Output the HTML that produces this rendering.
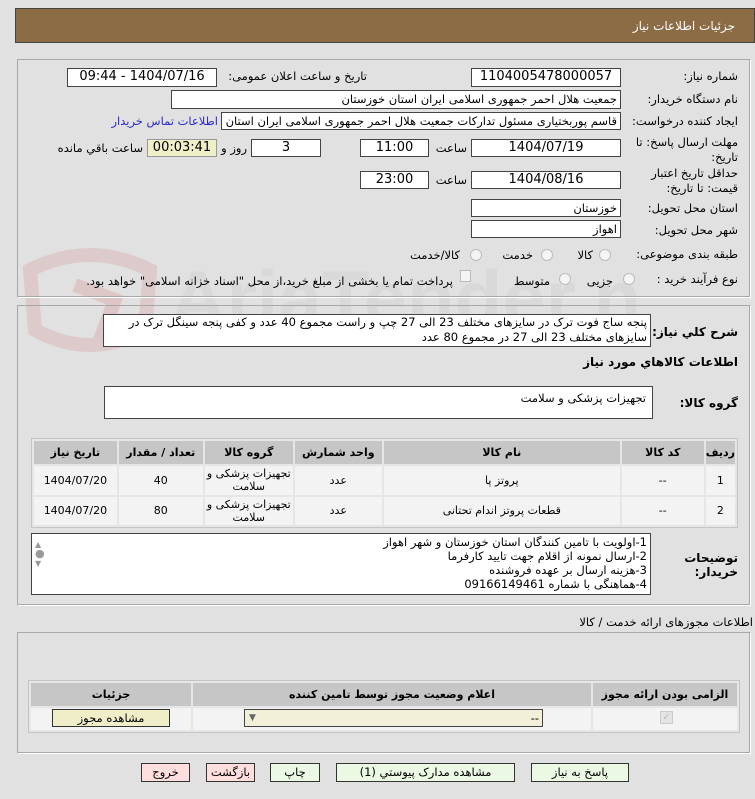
<!DOCTYPE html>
<html><head><meta charset="utf-8"><style>
*{box-sizing:border-box;margin:0;padding:0}
body{width:755px;height:799px;background:#e1e1e1;position:relative;overflow:hidden;font-family:"DejaVu Sans","Liberation Sans",sans-serif;font-size:11.5px;color:#000}
.a{position:absolute}
.in{position:absolute;background:#fff;border:1px solid #444;text-align:right;padding-right:3px;line-height:16px;white-space:nowrap;overflow:hidden;direction:rtl}
.c{text-align:center;padding:0}
.l{position:absolute;white-space:nowrap;direction:rtl;text-align:right}
.panel{position:absolute;border:1px solid #a8a8a8;border-right-color:#fff;border-bottom-color:#fff;box-shadow:inset -1px -1px 0 #a8a8a8}
.radio{position:absolute;width:12px;height:12px;border-radius:50%;border:1px solid #bbb;background:#f4f4f4}
table{border-collapse:separate;border-spacing:2px;position:absolute;background:#e6e6e6;border:1px solid #c4c4c4;direction:rtl}
td,th{text-align:center;direction:rtl}
th{background:#c6c6c6;font-weight:bold;font-size:11px}
td{background:#f3f3f3}
.btn{position:absolute;border:1px solid #333;background:#eaf8e4;text-align:center;line-height:17px;height:19px;direction:rtl}
.pink{background:#ffdede}
</style></head><body>
<div class="a" style="left:15px;top:8px;width:740px;height:35px;background:#8c6c45;border:1px solid #444"></div>
<div class="l" style="right:20px;top:19px;color:#fff;font-size:12px">جزئیات اطلاعات نیاز</div>

<svg class="a" style="left:20px;top:240px;opacity:.4" width="620" height="120">
<path d="M10 30 Q70 0 130 30 L125 90 Q70 120 15 90 Z" fill="none" stroke="#d9a9a9" stroke-width="14"/>
<path d="M55 45 L95 60 L80 100" fill="none" stroke="#dba0a0" stroke-width="14"/>
<text x="150" y="85" font-family="Liberation Sans" font-weight="bold" font-size="78" fill="#cfcfcf">AriaTender.net</text>
</svg>

<div class="panel" style="left:17px;top:59px;width:734px;height:239px"></div>
<div class="l" style="right:17px;top:69px">شماره نیاز:</div>
<div class="in c" style="left:471px;top:68px;width:150px;height:19px;font-size:13px">1104005478000057</div>
<div class="l" style="right:388px;top:69px">تاریخ و ساعت اعلان عمومی:</div>
<div class="in c" style="left:67px;top:68px;width:150px;height:19px;font-size:13px">1404/07/16 - 09:44</div>

<div class="l" style="right:17px;top:92px">نام دستگاه خریدار:</div>
<div class="in" style="left:171px;top:90px;width:450px;height:19px">جمعیت هلال احمر جمهوری اسلامی ایران استان خوزستان</div>

<div class="l" style="right:17px;top:114px">ایجاد کننده درخواست:</div>
<div class="in" style="left:221px;top:112px;width:400px;height:18px">قاسم پوربختیاری مسئول تدارکات جمعیت هلال احمر جمهوری اسلامی ایران استان</div>
<div class="l" style="right:537px;top:114px;color:#2a2ad0">اطلاعات تماس خریدار</div>

<div class="l" style="right:17px;top:135px">مهلت ارسال پاسخ: تا</div>
<div class="l" style="right:17px;top:150px">تاریخ:</div>
<div class="in c" style="left:471px;top:139px;width:150px;height:18px;font-size:13px">1404/07/19</div>
<div class="l" style="right:288px;top:141px">ساعت</div>
<div class="in c" style="left:360px;top:139px;width:69px;height:18px;font-size:13px">11:00</div>
<div class="in c" style="left:251px;top:139px;width:70px;height:18px;font-size:13px">3</div>
<div class="l" style="right:508px;top:141px">روز و</div>
<div class="in c" style="left:147px;top:139px;width:70px;height:18px;font-size:13px;background:#f0f0c8;border-color:#999">00:03:41</div>
<div class="l" style="right:612px;top:141px">ساعت باقي مانده</div>

<div class="l" style="right:17px;top:166px">حداقل تاریخ اعتبار</div>
<div class="l" style="right:17px;top:181px">قیمت: تا تاریخ:</div>
<div class="in c" style="left:471px;top:171px;width:150px;height:18px;font-size:13px">1404/08/16</div>
<div class="l" style="right:288px;top:173px">ساعت</div>
<div class="in c" style="left:360px;top:171px;width:69px;height:18px;font-size:13px">23:00</div>

<div class="l" style="right:17px;top:201px">استان محل تحویل:</div>
<div class="in" style="left:471px;top:199px;width:150px;height:18px">خوزستان</div>
<div class="l" style="right:17px;top:223px">شهر محل تحویل:</div>
<div class="in" style="left:471px;top:220px;width:150px;height:18px">اهواز</div>

<div class="l" style="right:17px;top:247px">طبقه بندی موضوعی:</div>
<div class="radio" style="left:599px;top:249px"></div><div class="l" style="right:162px;top:248px">کالا</div>
<div class="radio" style="left:541px;top:249px"></div><div class="l" style="right:222px;top:248px">خدمت</div>
<div class="radio" style="left:470px;top:249px"></div><div class="l" style="right:295px;top:248px">کالا/خدمت</div>

<div class="l" style="right:17px;top:272px">نوع فرآیند خرید :</div>
<div class="radio" style="left:623px;top:273px"></div><div class="l" style="right:142px;top:274px">جزیی</div>
<div class="radio" style="left:559px;top:273px"></div><div class="l" style="right:205px;top:274px">متوسط</div>
<div class="a" style="left:460px;top:270px;width:11px;height:12px;border:1px solid #bbb;background:#f4f4f4"></div>
<div class="l" style="right:302px;top:274px">پرداخت تمام یا بخشی از مبلغ خرید،از محل "اسناد خزانه اسلامی" خواهد بود.</div>

<div class="panel" style="left:17px;top:305px;width:734px;height:301px"></div>
<div class="l" style="right:17px;top:325px;font-weight:bold;font-size:12px">شرح کلي نیاز:</div>
<div class="in" style="left:103px;top:314px;width:548px;height:33px;white-space:normal;line-height:15px;font-size:11.5px">پنجه ساج فوت ترک در سایزهای مختلف 23 الی 27 چپ و راست مجموع 40 عدد و کفی پنجه سینگل ترک در سایزهای مختلف 23 الی 27 در مجموع 80 عدد</div>
<div class="l" style="right:17px;top:355px;font-weight:bold;font-size:12px">اطلاعات کالاهاي مورد نياز</div>
<div class="l" style="right:17px;top:396px;font-weight:bold;font-size:12px">گروه کالا:</div>
<div class="in" style="left:104px;top:386px;width:549px;height:33px;padding-top:3px;padding-right:6px">تجهیزات پزشکی و سلامت</div>

<table style="left:31px;top:438px;width:707px;height:90px;font-size:11px">
<tr style="height:23px"><th style="width:27px">ردیف</th><th style="width:82px">کد کالا</th><th style="width:236px">نام کالا</th><th style="width:87px">واحد شمارش</th><th style="width:88px">گروه کالا</th><th style="width:84px">تعداد / مقدار</th><th>تاریخ نیاز</th></tr>
<tr style="height:28px"><td>1</td><td>--</td><td>پروتز پا</td><td>عدد</td><td style="line-height:13px">تجهیزات پزشکی و سلامت</td><td>40</td><td>1404/07/20</td></tr>
<tr style="height:28px"><td>2</td><td>--</td><td>قطعات پروتز اندام تحتانی</td><td>عدد</td><td style="line-height:13px">تجهیزات پزشکی و سلامت</td><td>80</td><td>1404/07/20</td></tr>
</table>

<div class="l" style="right:17px;top:551px;font-weight:bold;font-size:12px">توضیحات</div>
<div class="l" style="right:17px;top:565px;font-weight:bold;font-size:12px">خریدار:</div>
<div class="in" style="left:31px;top:533px;width:620px;height:62px;white-space:normal;line-height:14px;padding-top:1px">1-اولویت با تامین کنندگان استان خوزستان و شهر اهواز<br>2-ارسال نمونه از اقلام جهت تایید کارفرما<br>3-هزینه ارسال بر عهده فروشنده<br>4-هماهنگی با شماره 09166149461</div>
<div class="a" style="left:35px;top:540px;color:#999;font-size:8px;line-height:9px">▲<br><span style="font-size:11px">●</span><br>▼</div>

<div class="l" style="right:2px;top:615px">اطلاعات مجوزهای ارائه خدمت / کالا</div>
<div class="panel" style="left:17px;top:632px;width:734px;height:122px"></div>
<table style="left:28px;top:680px;width:712px;height:52px;font-size:11px">
<tr style="height:23px"><th style="width:144px">الزامی بودن ارائه مجوز</th><th>اعلام وضعیت مجوز توسط تامین کننده</th><th style="width:160px">جزئیات</th></tr>
<tr style="height:22px"><td></td><td></td><td></td></tr>
</table>
<div class="a" style="left:660px;top:711px;width:13px;height:13px;background:#e4e4e4;border:1px solid #ccc;color:#bbb;font-size:10px;line-height:12px;text-align:center">✓</div>
<div class="in" style="left:244px;top:709px;width:299px;height:18px;background:#f2f0d8;padding-left:4px"><span style="float:left;color:#666;font-size:9px">▼</span>--</div>
<div class="btn" style="left:52px;top:709px;width:118px;height:18px;background:#f0eec8;line-height:16px">مشاهده مجوز</div>

<div class="btn" style="left:531px;top:763px;width:98px">پاسخ به نیاز</div>
<div class="btn" style="left:336px;top:763px;width:179px">مشاهده مدارک پیوستي (1)</div>
<div class="btn" style="left:270px;top:763px;width:50px">چاپ</div>
<div class="btn pink" style="left:206px;top:763px;width:49px">بازگشت</div>
<div class="btn pink" style="left:141px;top:763px;width:49px">خروج</div>
</body></html>
